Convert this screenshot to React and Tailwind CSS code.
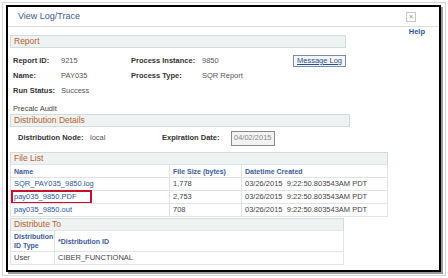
import React from "react";

const Section = ({ title, className = "" }) => (
  <div
    className={`bg-[#eef2f2] border border-[#d3dbdb] text-[#b8612c] text-[8.5px] leading-none flex items-center px-[3px] ${className}`}
  >
    {title}
  </div>
);

const Field = ({ label, value, lw = "w-[48px]" }) => (
  <div className="flex items-center">
    <span className={`${lw} font-bold text-[#333]`}>{label}</span>
    <span className="text-[#555]">{value}</span>
  </div>
);

const files = [
  { name: "SQR_PAY035_9850.log", size: "1,778" },
  { name: "pay035_9850.PDF", size: "2,753", marked: true },
  { name: "pay035_9850.out", size: "708" },
];

export default function App() {
  return (
    <div className="w-[448px] h-[278px] bg-white p-[2px] font-['Liberation_Sans',Arial,sans-serif]">
      <div className="h-[274px] border border-[#d4d4d4] pl-[3px] pt-[2px]">
        <div className="w-[435px] h-[267px] border-2 border-black bg-white shadow-[2px_2px_0_#9a9a9a] flex flex-col overflow-hidden">
          {/* title bar */}
          <div className="h-[20px] border-b border-[#d8dede] flex items-center justify-between pl-[10px] pr-[23px] shrink-0">
            <span className="text-[9px] text-[#3b5b8e]">View Log/Trace</span>
            <span className="w-[10px] h-[10px] border border-[#c8c8c8] text-[7px] leading-none text-[#888] flex items-center justify-center">
              ×
            </span>
          </div>

          <div className="flex flex-col pl-[2px] text-[7.5px] leading-none">
            <div className="h-[8px] flex items-end justify-end pr-[14px]">
              <span className="text-[#2a56a0] font-bold text-[7.5px]">Help</span>
            </div>

            <Section title="Report" className="w-[336px] h-[13px]" />

            <div className="w-[336px] pl-[3px]">
              <div className="h-[15px] mt-[5px] flex items-center justify-between">
                <div className="flex">
                  <div className="w-[118px]">
                    <Field label="Report ID:" value="9215" />
                  </div>
                  <Field label="Process Instance:" value="9850" lw="w-[71px]" />
                </div>
                <span className="h-[12px] px-[3px] border border-[#7a8aa8] bg-[#f4f6f8] text-[#2a4f90] underline flex items-center">
                  Message Log
                </span>
              </div>
              <div className="h-[15px] flex items-center">
                <div className="w-[118px]">
                  <Field label="Name:" value="PAY035" />
                </div>
                <Field label="Process Type:" value="SQR Report" lw="w-[71px]" />
              </div>
              <div className="h-[15px] flex items-center">
                <Field label="Run Status:" value="Success" />
              </div>
              <div className="h-[15px] flex items-end text-[#444] pb-[1px]">Precalc Audit</div>
            </div>

            <Section title="Distribution Details" className="w-[340px] h-[13px] mt-[1px]" />

            <div className="h-[22px] flex items-center pl-[8px]">
              <div className="w-[144px]">
                <Field label="Distribution Node:" value="local" lw="w-[72px]" />
              </div>
              <span className="w-[69px] font-bold text-[#333]">Expiration Date:</span>
              <span className="w-[44px] h-[15px] border border-[#8a8a8a] bg-[#f2f2f2] text-[#8a8a8a] flex items-center pl-[2px]">
                04/02/2015
              </span>
            </div>

            {/* File list */}
            <div className="w-[378px] mt-[3px] flex flex-col">
              <Section title="File List" className="h-[12px] border-b-0" />
              <div className="grid grid-cols-[159px_72px_145px] border border-[#dfe4e4]">
                <div className="h-[12px] flex items-center px-[3px] font-bold text-[#3b5b9a] text-[7px] border-r border-[#dfe4e4]">Name</div>
                <div className="h-[12px] flex items-center px-[3px] font-bold text-[#3b5b9a] text-[7px] border-r border-[#dfe4e4]">File Size (bytes)</div>
                <div className="h-[12px] flex items-center px-[3px] font-bold text-[#3b5b9a] text-[7px]">Datetime Created</div>
                {files.map((f) => (
                  <React.Fragment key={f.name}>
                    <div className="relative h-[13px] flex items-center px-[3px] text-[#2a56a0] border-t border-r border-[#dfe4e4]">
                      {f.name}
                      {f.marked && (
                        <span className="absolute left-0 top-[-1px] w-[81px] h-[14px] border-2 border-[#c8102e]" />
                      )}
                    </div>
                    <div className="h-[13px] flex items-center px-[3px] text-[#444] border-t border-r border-[#dfe4e4]">{f.size}</div>
                    <div className="h-[13px] flex items-center px-[3px] text-[#444] border-t border-[#dfe4e4] whitespace-pre">
                      {"03/26/2015  9:22:50.803543AM PDT"}
                    </div>
                  </React.Fragment>
                ))}
              </div>
            </div>

            {/* Distribute to */}
            <div className="w-[334px] mt-[1px] flex flex-col">
              <Section title="Distribute To" className="h-[12px] border-b-0" />
              <div className="grid grid-cols-[44px_288px] border border-[#dfe4e4]">
                <div className="h-[20px] flex flex-col justify-center gap-[2px] px-[3px] font-bold text-[#3b5b9a] text-[7px] border-r border-[#dfe4e4]">
                  <span>Distribution</span>
                  <span>ID Type</span>
                </div>
                <div className="h-[20px] flex items-center px-[3px] font-bold text-[#3b5b9a] text-[7px]">*Distribution ID</div>
                <div className="h-[13px] flex items-center px-[3px] text-[#444] border-t border-r border-[#dfe4e4]">User</div>
                <div className="h-[13px] flex items-center px-[3px] text-[#444] border-t border-[#dfe4e4]">CIBER_FUNCTIONAL</div>
              </div>
            </div>
          </div>
        </div>
      </div>
    </div>
  );
}
